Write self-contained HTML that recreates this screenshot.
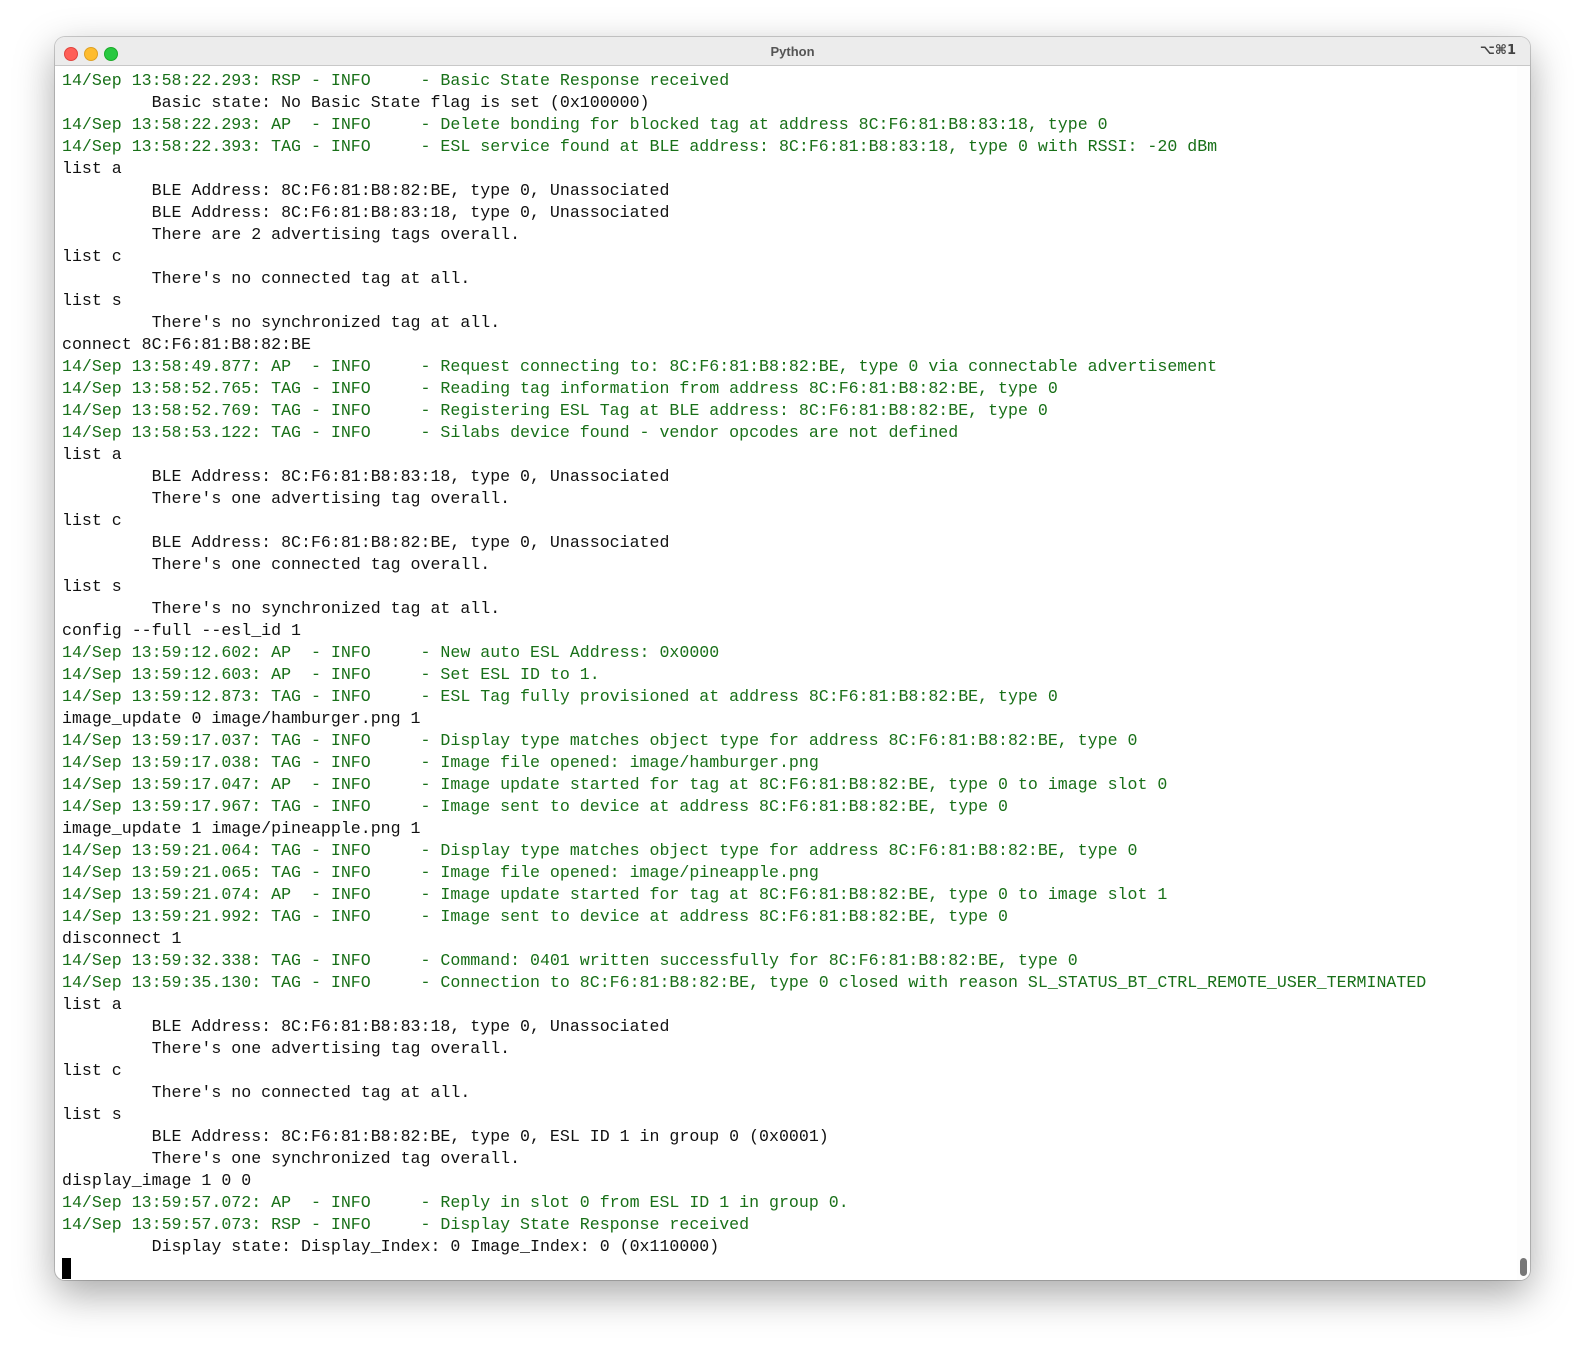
<!DOCTYPE html>
<html><head><meta charset="utf-8"><style>
html,body{margin:0;padding:0;background:#fff;width:1587px;height:1355px;overflow:hidden}
.win{position:absolute;left:55px;top:37px;width:1475px;height:1243px;border-radius:10px;background:#fff;box-shadow:0 14px 40px rgba(0,0,0,.35),0 0 0 1px rgba(0,0,0,.18);overflow:hidden}
.tb{position:absolute;left:0;top:0;right:0;height:28px;background:#ececec;border-bottom:1px solid #c8c8c8}
.tl{position:absolute;top:10px;width:12px;height:12px;border-radius:50%}
.title{position:absolute;left:0;right:0;top:7px;text-align:center;font:bold 13px "Liberation Sans",sans-serif;color:#555}
.kb{position:absolute;right:14px;top:6px;font:bold 13px "DejaVu Sans",sans-serif;color:#444}
.sb{position:absolute;right:0;top:29px;bottom:0;width:13px;background:#fdfdfd}
.thumb{position:absolute;right:3px;bottom:4px;width:7px;height:18px;border-radius:4px;background:#777}
pre{position:absolute;left:7px;top:33px;margin:0;font:16.6px/22px "Liberation Mono",monospace;color:#111}
.g{color:#187018}
.cur{display:inline-block;width:9px;height:21px;background:#000;vertical-align:top}
</style></head><body>
<div class="win">
<div class="tb">
<div class="tl" style="left:9px;background:#ff5f57;border:0.5px solid #e0443e"></div>
<div class="tl" style="left:29px;background:#febc2e;border:0.5px solid #dea123"></div>
<div class="tl" style="left:49px;background:#28c840;border:0.5px solid #1aab29"></div>
<div class="title">Python</div>
<div class="kb">⌥⌘1</div>
</div>
<div class="sb"><div class="thumb"></div></div>
<pre><span class="g">14/Sep 13:58:22.293: RSP - INFO     - Basic State Response received</span>
         Basic state: No Basic State flag is set (0x100000)
<span class="g">14/Sep 13:58:22.293: AP  - INFO     - Delete bonding for blocked tag at address 8C:F6:81:B8:83:18, type 0</span>
<span class="g">14/Sep 13:58:22.393: TAG - INFO     - ESL service found at BLE address: 8C:F6:81:B8:83:18, type 0 with RSSI: -20 dBm</span>
list a
         BLE Address: 8C:F6:81:B8:82:BE, type 0, Unassociated
         BLE Address: 8C:F6:81:B8:83:18, type 0, Unassociated
         There are 2 advertising tags overall.
list c
         There's no connected tag at all.
list s
         There's no synchronized tag at all.
connect 8C:F6:81:B8:82:BE
<span class="g">14/Sep 13:58:49.877: AP  - INFO     - Request connecting to: 8C:F6:81:B8:82:BE, type 0 via connectable advertisement</span>
<span class="g">14/Sep 13:58:52.765: TAG - INFO     - Reading tag information from address 8C:F6:81:B8:82:BE, type 0</span>
<span class="g">14/Sep 13:58:52.769: TAG - INFO     - Registering ESL Tag at BLE address: 8C:F6:81:B8:82:BE, type 0</span>
<span class="g">14/Sep 13:58:53.122: TAG - INFO     - Silabs device found - vendor opcodes are not defined</span>
list a
         BLE Address: 8C:F6:81:B8:83:18, type 0, Unassociated
         There's one advertising tag overall.
list c
         BLE Address: 8C:F6:81:B8:82:BE, type 0, Unassociated
         There's one connected tag overall.
list s
         There's no synchronized tag at all.
config --full --esl_id 1
<span class="g">14/Sep 13:59:12.602: AP  - INFO     - New auto ESL Address: 0x0000</span>
<span class="g">14/Sep 13:59:12.603: AP  - INFO     - Set ESL ID to 1.</span>
<span class="g">14/Sep 13:59:12.873: TAG - INFO     - ESL Tag fully provisioned at address 8C:F6:81:B8:82:BE, type 0</span>
image_update 0 image/hamburger.png 1
<span class="g">14/Sep 13:59:17.037: TAG - INFO     - Display type matches object type for address 8C:F6:81:B8:82:BE, type 0</span>
<span class="g">14/Sep 13:59:17.038: TAG - INFO     - Image file opened: image/hamburger.png</span>
<span class="g">14/Sep 13:59:17.047: AP  - INFO     - Image update started for tag at 8C:F6:81:B8:82:BE, type 0 to image slot 0</span>
<span class="g">14/Sep 13:59:17.967: TAG - INFO     - Image sent to device at address 8C:F6:81:B8:82:BE, type 0</span>
image_update 1 image/pineapple.png 1
<span class="g">14/Sep 13:59:21.064: TAG - INFO     - Display type matches object type for address 8C:F6:81:B8:82:BE, type 0</span>
<span class="g">14/Sep 13:59:21.065: TAG - INFO     - Image file opened: image/pineapple.png</span>
<span class="g">14/Sep 13:59:21.074: AP  - INFO     - Image update started for tag at 8C:F6:81:B8:82:BE, type 0 to image slot 1</span>
<span class="g">14/Sep 13:59:21.992: TAG - INFO     - Image sent to device at address 8C:F6:81:B8:82:BE, type 0</span>
disconnect 1
<span class="g">14/Sep 13:59:32.338: TAG - INFO     - Command: 0401 written successfully for 8C:F6:81:B8:82:BE, type 0</span>
<span class="g">14/Sep 13:59:35.130: TAG - INFO     - Connection to 8C:F6:81:B8:82:BE, type 0 closed with reason SL_STATUS_BT_CTRL_REMOTE_USER_TERMINATED</span>
list a
         BLE Address: 8C:F6:81:B8:83:18, type 0, Unassociated
         There's one advertising tag overall.
list c
         There's no connected tag at all.
list s
         BLE Address: 8C:F6:81:B8:82:BE, type 0, ESL ID 1 in group 0 (0x0001)
         There's one synchronized tag overall.
display_image 1 0 0
<span class="g">14/Sep 13:59:57.072: AP  - INFO     - Reply in slot 0 from ESL ID 1 in group 0.</span>
<span class="g">14/Sep 13:59:57.073: RSP - INFO     - Display State Response received</span>
         Display state: Display_Index: 0 Image_Index: 0 (0x110000)
<span class="cur"></span></pre>
</div>
</body></html>
